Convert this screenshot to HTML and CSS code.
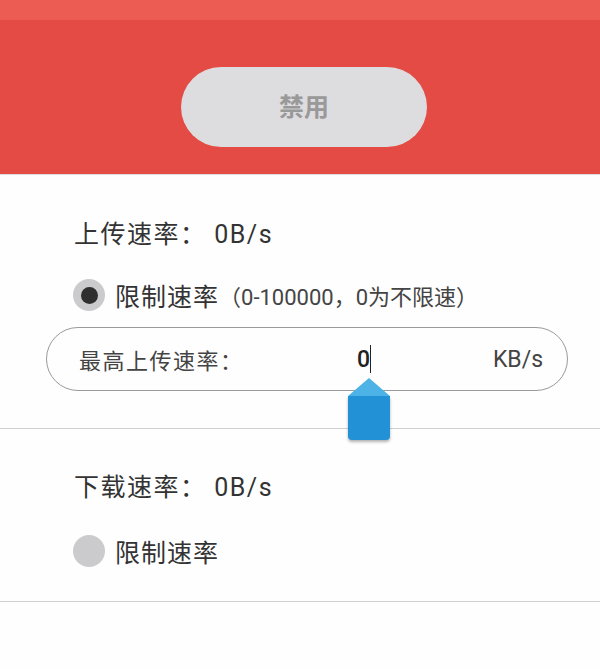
FILE: index.html
```html
<!DOCTYPE html>
<html lang="zh-CN">
<head>
    <meta charset="UTF-8">
    <meta name="viewport" content="width=device-width, initial-scale=1.0">
    <title>速率限制</title>
    <link rel="stylesheet" href="styles.css">
</head>
<body>
<div class="header">
    <div class="status-strip"></div>
    <div class="header-body">
        <button class="toggle-btn">禁用</button>
    </div>
</div>

<!-- Upload Section -->
<div class="section upload">
    <div class="rate-line">上传速率： 0B/s</div>
    <div class="radio-row">
        <span class="radio checked"><span class="dot"></span></span>
        <span class="radio-label">限制速率</span><span class="hint">（0-100000，0为不限速）</span>
    </div>
    <div class="speed-input">
        <span class="input-label">最高上传速率：</span>
        <span class="input-value">0<span class="caret"></span>
            <span class="handle"></span>
        </span>
        <span class="input-unit">KB/s</span>
    </div>
</div>

<!-- Download Section -->
<div class="section download">
    <div class="rate-line">下载速率： 0B/s</div>
    <div class="radio-row">
        <span class="radio"></span>
        <span class="radio-label">限制速率</span>
    </div>
</div>
</body>
</html>
```

FILE: styles.css
```css
body {
    margin: 0;
    padding: 0;
    font-family: 'Roboto', 'Noto Sans CJK SC', sans-serif;
    background-color: #fefefe;
    color: #333;
}

.header {
    background-color: #e34b44;
    border-bottom: 1px solid #ddd;
}

.status-strip {
    height: 20px;
    background-color: #ec5c53;
}

.header-body {
    height: 154px;
    display: flex;
    justify-content: center;
    padding: 47px 0 0 8px;
    box-sizing: border-box;
}

.toggle-btn {
    width: 246px;
    height: 80px;
    border: none;
    border-radius: 40px;
    background-color: #dddcdf;
    color: #999;
    font-family: 'Noto Sans CJK SC', sans-serif;
    font-weight: bold;
    font-size: 25px;
    padding: 0 0 4px;
}

/* Sections */
.section {
    border-bottom: 1px solid #cfcfcf;
}

.upload {
    padding: 44px 0 0;
    height: 254px;
    box-sizing: border-box;
}

.download {
    padding: 43px 0 0;
    height: 173px;
    box-sizing: border-box;
}

.rate-line {
    margin-left: 74px;
    font-size: 25px;
    letter-spacing: 1.5px;
    line-height: 32px;
}

.radio-row {
    display: flex;
    align-items: center;
    margin-left: 73px;
    margin-top: 28px;
    height: 32px;
}

.download .radio-row {
    margin-top: 31px;
}

.radio {
    width: 32px;
    height: 32px;
    border-radius: 50%;
    background-color: #cbcacd;
    display: flex;
    align-items: center;
    justify-content: center;
    margin-right: 10px;
}

.radio .dot {
    width: 17px;
    height: 17px;
    border-radius: 50%;
    background-color: #2f2f2f;
}

.radio-label {
    font-size: 25px;
    letter-spacing: 1px;
}

.hint {
    font-size: 22px;
    color: #444;
}

/* Input pill */
.speed-input {
    margin: 16px 32px 0 46px;
    height: 64px;
    border: 1px solid #9a9a9a;
    border-radius: 32px;
    display: flex;
    align-items: center;
    box-sizing: border-box;
    padding: 0 24px 0 32px;
}

.input-label {
    font-size: 22px;
    letter-spacing: 1.5px;
    color: #444;
    width: 278px;
}

.input-value {
    position: relative;
    font-size: 23px;
    font-weight: 500;
    color: #222;
    flex: 1;
}

.caret {
    display: inline-block;
    width: 1px;
    height: 28px;
    background-color: #222;
    vertical-align: -6px;
}

.handle {
    position: absolute;
    left: -9px;
    top: 51px;
    width: 42px;
    height: 44px;
    background-color: #2391d6;
    border-radius: 0 0 4px 4px;
    box-shadow: 0 2px 3px rgba(0, 0, 0, 0.3);
}

.handle::before {
    content: '';
    position: absolute;
    left: 0;
    top: -18px;
    border-left: 21px solid transparent;
    border-right: 21px solid transparent;
    border-bottom: 18px solid #4db3e6;
}

.input-unit {
    font-size: 23px;
    color: #444;
}
```
